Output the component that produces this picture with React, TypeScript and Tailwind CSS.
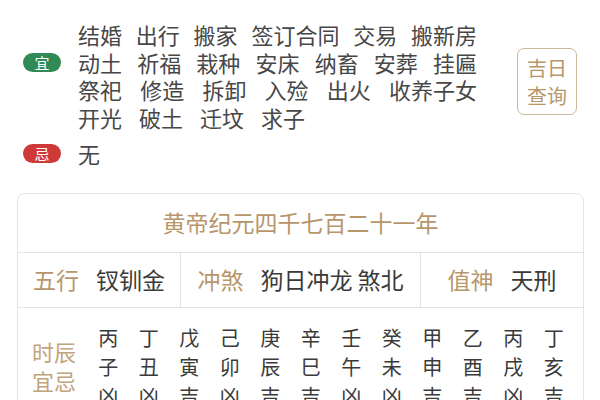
const yiLines = [
  ["结婚", "出行", "搬家", "签订合同", "交易", "搬新房"],
  ["动土", "祈福", "栽种", "安床", "纳畜", "安葬", "挂匾"],
  ["祭祀", "修造", "拆卸", "入殓", "出火", "收养子女"],
];
const yiLast = ["开光", "破土", "迁坟", "求子"];

const hours = [
  ["丙", "子", "凶"],
  ["丁", "丑", "凶"],
  ["戊", "寅", "吉"],
  ["己", "卯", "凶"],
  ["庚", "辰", "吉"],
  ["辛", "巳", "吉"],
  ["壬", "午", "凶"],
  ["癸", "未", "凶"],
  ["甲", "申", "吉"],
  ["乙", "酉", "吉"],
  ["丙", "戌", "凶"],
  ["丁", "亥", "吉"],
];

export default function App() {
  return (
    <div className="w-[600px] h-[400px] overflow-hidden bg-white font-['Noto_Sans_CJK_SC','Noto_Sans',sans-serif]">
      {/* 宜 / 忌 */}
      <div className="flex pl-[23px] pt-[21px]">
        <div className="flex flex-col">
          <div className="flex items-start">
            <div className="mt-[32px] w-[38px] h-[19px] rounded-full bg-[#2f8a55] text-white text-[15px] leading-[19px] flex items-center justify-center">
              宜
            </div>
            <div className="ml-[17px] w-[399px] text-[22px] leading-[27.5px] text-[#474747]">
              {yiLines.map((line, i) => (
                <div key={i} className="flex justify-between">
                  {line.map((w) => (
                    <span key={w}>{w}</span>
                  ))}
                </div>
              ))}
              <div className="flex gap-[17px]">
                {yiLast.map((w) => (
                  <span key={w}>{w}</span>
                ))}
              </div>
            </div>
          </div>
          <div className="flex items-center mt-[9px]">
            <div className="w-[38px] h-[19px] rounded-full bg-[#cf3a38] text-white text-[15px] leading-[19px] flex items-center justify-center">
              忌
            </div>
            <span className="ml-[17px] text-[22px] leading-[27.5px] text-[#474747]">无</span>
          </div>
        </div>
        <button className="ml-auto mr-[23px] mt-[27px] w-[60px] h-[67px] rounded-[7px] border border-[#cdb89c] text-[#b8966b] text-[20px] leading-[28px] flex flex-col items-center justify-center">
          <span>吉日</span>
          <span>查询</span>
        </button>
      </div>

      {/* 黄历卡片 */}
      <div className="ml-[17px] mt-[25px] w-[567px] rounded-[8px] border border-[#e7e3de]">
        <div className="h-[59px] flex items-center justify-center border-b border-[#e7e3de] text-[23px] text-[#b8966b]">
          黄帝纪元四千七百二十一年
        </div>
        <div className="h-[55px] grid grid-cols-[163px_240px_1fr] border-b border-[#e7e3de] text-[23px]">
          <div className="flex items-center justify-center gap-[17px] border-r border-[#e7e3de]">
            <span className="text-[#b8966b]">五行</span>
            <span className="text-[#3a3a3a]">钗钏金</span>
          </div>
          <div className="flex items-center justify-center gap-[17px] border-r border-[#e7e3de]">
            <span className="text-[#b8966b]">冲煞</span>
            <span className="text-[#3a3a3a]">狗日冲龙 煞北</span>
          </div>
          <div className="flex items-center justify-center gap-[17px]">
            <span className="text-[#b8966b]">值神</span>
            <span className="text-[#3a3a3a]">天刑</span>
          </div>
        </div>
        <div className="flex items-center pl-[14px] pt-[15px] pb-[12px]">
          <div className="w-[56px] text-[22px] leading-[29px] text-[#c2a47c]">
            <div>时辰</div>
            <div>宜忌</div>
          </div>
          <div className="w-[486px] grid grid-cols-12 text-[20px] leading-[29px] text-[#3a3a3a]">
            {hours.map((h, i) => (
              <div key={i} className="flex flex-col items-center">
                {h.map((c, j) => (
                  <span key={j}>{c}</span>
                ))}
              </div>
            ))}
          </div>
        </div>
      </div>
    </div>
  );
}
